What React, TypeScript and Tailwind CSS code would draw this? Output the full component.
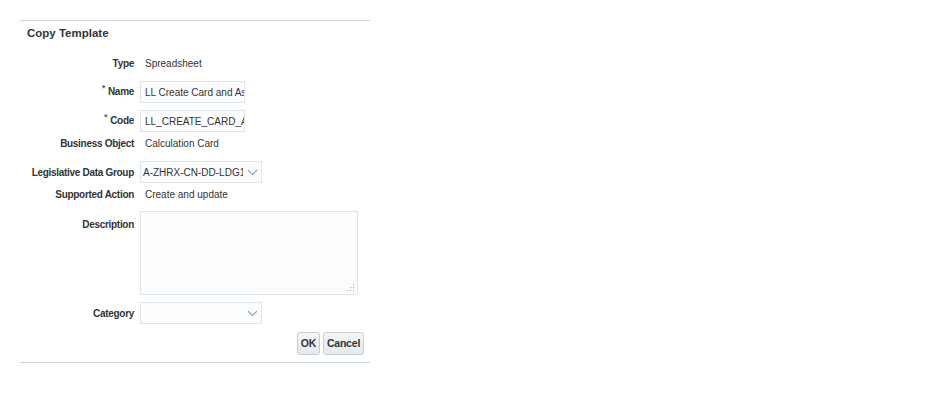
import React from "react";

const FONT = { fontFamily: '"Liberation Sans", Arial, sans-serif' };

function Label({ children, required }: { children: React.ReactNode; required?: boolean }) {
  return (
    <div className="w-[114px] shrink-0 whitespace-nowrap text-right text-[10px] font-bold tracking-[-0.3px] text-[#333333]">
      {required && <span className="relative -top-[4px] mr-[3px] text-[9px] font-bold text-[#3a6e99]">*</span>}
      {children}
    </div>
  );
}

function Chevron() {
  return (
    <svg width="11" height="7" viewBox="0 0 11 7" className="shrink-0">
      <path d="M1 1.2 L5.5 5.6 L10 1.2" fill="none" stroke="#8c9aa5" strokeWidth="1.1" />
    </svg>
  );
}

function Row({ className, children }: { className: string; children: React.ReactNode }) {
  return <div className={`flex gap-[6px] ${className}`}>{children}</div>;
}

function TextInput({ value }: { value: string }) {
  return (
    <div className="flex h-[22px] w-[105px] items-center overflow-hidden whitespace-nowrap border border-[#dfe4e8] bg-[#fcfdfe] pl-[4px] text-[10px] text-[#333333]">
      {value}
    </div>
  );
}

function Select({ value }: { value: string }) {
  return (
    <div className="flex h-[22px] w-[122px] items-center border border-[#dfe4e8] bg-[#fcfdfe] pr-[3px] text-[10px] text-[#333333]">
      <span className="flex-1 overflow-hidden whitespace-nowrap pl-[2px]">{value}</span>
      <span className="pl-[4px]">
        <Chevron />
      </span>
    </div>
  );
}

export default function App() {
  return (
    <div className="h-[401px] w-[934px] bg-white" style={FONT}>
      <div className="ml-[20px] w-[350px] pt-[20px]">
        <div className="border-t border-[#c9d2da]" />
        <div className="pl-[7px] pt-[5px] text-[11.5px] font-bold leading-[14px] text-[#333333]">Copy Template</div>

        <Row className="mt-[12px] h-[22px] items-center">
          <Label>Type</Label>
          <div className="pl-[5px] text-[10px] text-[#333333]">Spreadsheet</div>
        </Row>

        <Row className="mt-[7px] h-[22px] items-center">
          <Label required>Name</Label>
          <TextInput value="LL Create Card and Assign" />
        </Row>

        <Row className="mt-[7px] h-[22px] items-center">
          <Label required>Code</Label>
          <TextInput value="LL_CREATE_CARD_AND" />
        </Row>

        <Row className="h-[22px] items-center">
          <Label>Business Object</Label>
          <div className="pl-[5px] text-[10px] text-[#333333]">Calculation Card</div>
        </Row>

        <Row className="mt-[7px] h-[22px] items-center">
          <Label>Legislative Data Group</Label>
          <Select value="A-ZHRX-CN-DD-LDG1" />
        </Row>

        <Row className="h-[22px] items-center">
          <Label>Supported Action</Label>
          <div className="pl-[5px] text-[10px] text-[#333333]">Create and update</div>
        </Row>

        <Row className="mt-[6px] items-start">
          <div className="pt-[6px]">
            <Label>Description</Label>
          </div>
          <div className="relative h-[84px] w-[218px] border border-[#dfe4e8] bg-[#fcfdfe]">
            <svg width="9" height="9" viewBox="0 0 9 9" className="absolute bottom-[2px] right-[2px]">
              <rect x="7" y="1" width="1.2" height="1.2" fill="#a7b0b8" />
              <rect x="4" y="4" width="1.2" height="1.2" fill="#a7b0b8" />
              <rect x="7" y="4" width="1.2" height="1.2" fill="#a7b0b8" />
              <rect x="1" y="7" width="1.2" height="1.2" fill="#a7b0b8" />
              <rect x="4" y="7" width="1.2" height="1.2" fill="#a7b0b8" />
              <rect x="7" y="7" width="1.2" height="1.2" fill="#a7b0b8" />
            </svg>
          </div>
        </Row>

        <Row className="mt-[7px] h-[22px] items-center">
          <Label>Category</Label>
          <Select value="" />
        </Row>

        <div className="mt-[8px] flex h-[23px] justify-end gap-[3px] pr-[6px]">
          <button className="w-[23px] rounded-[3px] border border-[#c4ced6] bg-gradient-to-b from-[#f4f6f8] to-[#e4e9ed] text-[10.5px] font-bold text-[#333333]">
            OK
          </button>
          <button className="w-[41px] rounded-[3px] border border-[#c4ced6] bg-gradient-to-b from-[#f4f6f8] to-[#e4e9ed] text-[10.5px] font-bold tracking-[-0.2px] text-[#333333]">
            Cancel
          </button>
        </div>

        <div className="mt-[7px] border-t border-[#c9d2da]" />
      </div>
    </div>
  );
}
